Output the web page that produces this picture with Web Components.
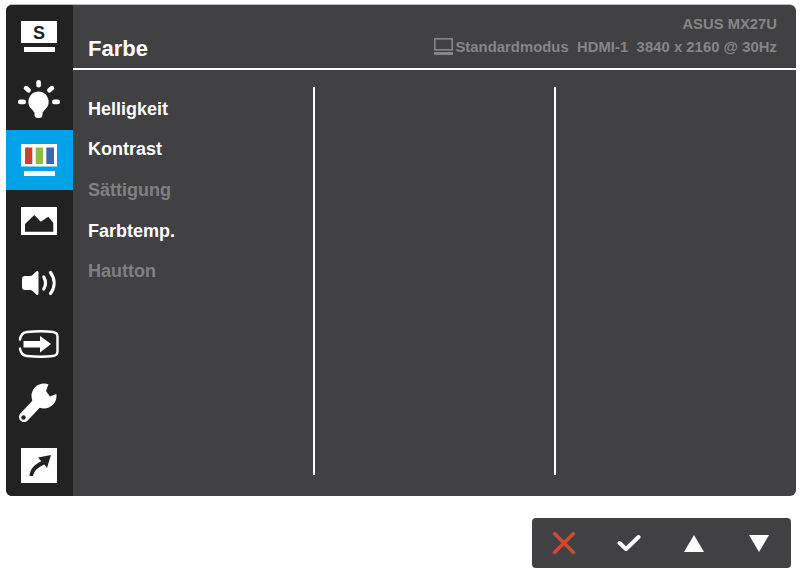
<!DOCTYPE html>
<html>
<head>
<meta charset="utf-8">
<title>OSD</title>
<style>
    html, body { margin: 0; background: #fff; }
    body { width: 800px; height: 573px; overflow: hidden; font-family: "Liberation Sans", Arial, sans-serif; }
</style>
</head>
<body>
<osd-screen>
    <osd-sidebar slot="side">
        <osd-tab icon="splendid"></osd-tab>
        <osd-tab icon="bulb"></osd-tab>
        <osd-tab icon="colors" active></osd-tab>
        <osd-tab icon="image"></osd-tab>
        <osd-tab icon="sound"></osd-tab>
        <osd-tab icon="input"></osd-tab>
        <osd-tab icon="wrench"></osd-tab>
        <osd-tab icon="shortcut"></osd-tab>
    </osd-sidebar>
    <osd-header slot="head" heading="Farbe" model="ASUS MX27U" status="Standardmodus&nbsp; HDMI-1&nbsp; 3840 x 2160 @ 30Hz"></osd-header>
    <osd-columns slot="body">
        <osd-item>Helligkeit</osd-item>
        <osd-item>Kontrast</osd-item>
        <osd-item disabled>Sättigung</osd-item>
        <osd-item>Farbtemp.</osd-item>
        <osd-item disabled>Hautton</osd-item>
    </osd-columns>
</osd-screen>
<osd-keys></osd-keys>

<script>
const TAB_ICONS = {
    splendid: `<svg width="36" height="31" viewBox="0 0 36 31">
        <rect x="0" y="0" width="36" height="22" fill="#fff"/>
        <rect x="3" y="26" width="31" height="5" fill="#fff"/>
        <text x="18" y="18" text-anchor="middle" font-family="Liberation Sans" font-weight="700" font-size="18" fill="#232223">S</text>
    </svg>`,
    bulb: `<svg width="42" height="38" viewBox="0 0 42 38" fill="#fff">
        <path d="M20.500 11.500a10.200 10.200 0 0 1 6.500 18c-1 .9-1.600 1.800-1.800 2.800h-9.400c-.2-1-.8-1.900-1.800-2.800a10.200 10.200 0 0 1 6.500-18z"/>
        <path d="M16.500 32h8v2.500a3.500 3.500 0 0 1-3.500 3.500h-1a3.500 3.500 0 0 1-3.500-3.500z"/>
        <rect x="18.300" y="0" width="4.600" height="7.500" rx="2.300"/>
        <rect x="0" y="19.600" width="8" height="4.600" rx="2.300"/>
        <rect x="34" y="19.600" width="8" height="4.600" rx="2.300"/>
        <rect x="7" y="5.200" width="4.600" height="8" rx="2.300" transform="rotate(-50 9.300 9.200)"/>
        <rect x="30.400" y="5.200" width="4.600" height="8" rx="2.300" transform="rotate(50 32.700 9.200)"/>
    </svg>`,
    colors: `<svg width="36" height="32" viewBox="0 0 36 32">
        <rect x="0" y="0" width="36" height="22.500" fill="#fff"/>
        <rect x="4" y="3.500" width="7.300" height="16.500" fill="#c8432c"/>
        <rect x="14.700" y="3.500" width="7.300" height="16.500" fill="#8cbd44"/>
        <rect x="25.300" y="3.500" width="7.700" height="16.500" fill="#3f66b0"/>
        <rect x="3" y="27" width="31" height="5" fill="#fff"/>
    </svg>`,
    image: `<svg width="36" height="28" viewBox="0 0 36 28">
        <path fill="#fff" fill-rule="evenodd" d="M0 0h36v28H0zM4 24.700h28.300v-9L27.300 9.700l-7.600 5L13.300 8 4 17z"/>
    </svg>`,
    sound: `<svg width="36" height="26" viewBox="0 0 36 26" fill="none">
        <path fill="#fff" d="M1 9C1 7 2 6 4 6H10C12 5 14 2.500 15.500 1.300 16.500.6 17.500 1.200 17.500 2.500V23.500C17.500 24.800 16.500 25.400 15.500 24.700 14 23.500 12 21 10 20H4C2 20 1 19 1 17z"/>
        <path stroke="#fff" stroke-width="3.200" stroke-linecap="round" d="M22.800 7c2.300 4 2.300 8 0 12"/>
        <path stroke="#fff" stroke-width="3.200" stroke-linecap="round" d="M29.500 2.500c4.800 6.500 4.800 14.500 0 21"/>
    </svg>`,
    input: `<svg width="42" height="30" viewBox="0 0 42 30" fill="none">
        <path stroke="#fff" stroke-width="2.400" stroke-linecap="round" d="M2 10.500C2.500 6.500 4.500 3.500 9 3 18 2 28 2 35 3 38.500 3.500 39.500 5 39.500 7.500V22.500C39.500 25 38.500 26.500 35 27 28 28 18 28 9 27 4.500 26.500 2.500 23.500 2 19.500"/>
        <path fill="#fff" d="M5.500 12h16.500V7l11 8-11 8.500v-5H5.500z"/>
    </svg>`,
    wrench: `<svg width="42" height="42" viewBox="0 0 42 42">
        <path stroke="#fff" stroke-width="10" stroke-linecap="round" d="M6 34 22 17"/>
        <circle cx="26" cy="13" r="12.500" fill="#fff"/>
        <path fill="#232223" d="M31 0 28 8 32 13.500 42 9.500V0z"/>
        <circle cx="5.500" cy="34.500" r="2.200" fill="#232223"/>
    </svg>`,
    shortcut: `<svg width="36" height="35" viewBox="0 0 36 35">
        <rect width="36" height="35" fill="#fff"/>
        <path fill="#232223" d="M30 7 17 9.500 20.300 13.300C13.500 16.500 9 21 8.500 28H12C13 23 17 19 23.500 16.500L26 20z"/>
    </svg>`
};

class OsdScreen extends HTMLElement {
    constructor() {
        super();
        this.attachShadow({ mode: 'open' });
        this.shadowRoot.innerHTML = `
            <style>
                :host {
                    display: grid;
                    grid-template-columns: 67px 723px;
                    grid-template-rows: 65px 426px;
                    margin: 5px 4px 0 6px;
                    height: 491px;
                    background: #414042;
                    border-radius: 6px;
                    overflow: hidden;
                    box-shadow: 0 -1px 0 #bbb;
                }
                ::slotted([slot=side]) { grid-row: 1 / 3; }
            </style>
            <slot name="side"></slot>
            <slot name="head"></slot>
            <slot name="body"></slot>
        `;
    }
}

class OsdSidebar extends HTMLElement {
    constructor() {
        super();
        this.attachShadow({ mode: 'open' });
        this.shadowRoot.innerHTML = `
            <style>
                :host {
                    display: grid;
                    grid-template-rows: 61px 64px 60px 62px 61px 61px 60px 62px;
                    background: #232223;
                }
            </style>
            <slot></slot>
        `;
    }
}

class OsdTab extends HTMLElement {
    connectedCallback() {
        const name = this.getAttribute('icon');
        this.attachShadow({ mode: 'open' });
        this.shadowRoot.innerHTML = `
            <style>
                :host { display: flex; align-items: center; justify-content: center; padding-right: 1px; }
                :host([active]) { background: #00a3e8; }
                :host([icon=splendid]), :host([icon=bulb]) { padding-top: 2px; }
                svg { display: block; }
            </style>
            ${TAB_ICONS[name]}
        `;
    }
}

class OsdHeader extends HTMLElement {
    connectedCallback() {
        this.attachShadow({ mode: 'open' });
        this.shadowRoot.innerHTML = `
            <style>
                :host {
                    display: flex;
                    justify-content: space-between;
                    align-items: flex-end;
                    padding: 0 19px 6px 15px;
                    border-bottom: 2px solid #fff;
                    height: 57px;
                }
                h1 { margin: 0; font: 700 22px/26px "Liberation Sans", sans-serif; color: #fff; }
                .info { margin-bottom: 6px; text-align: right; color: #868688; font: 700 14.8px/17px "Liberation Sans", sans-serif; }
                .model { margin-bottom: 5px; }
                .status { display: flex; align-items: flex-end; gap: 2px; letter-spacing: .05px; }
                svg { display: block; }
            </style>
            <h1>${this.getAttribute('heading')}</h1>
            <div class="info">
                <div class="model">${this.getAttribute('model')}</div>
                <div class="status">
                    <svg width="19" height="18" viewBox="0 0 19 18" fill="none" stroke="#868688">
                        <rect x=".8" y=".8" width="17.400" height="11" stroke-width="1.600"/>
                        <path d="M0 15.500h19" stroke-width="3"/>
                    </svg>
                    <span>${this.getAttribute('status')}</span>
                </div>
            </div>
        `;
    }
}

class OsdColumns extends HTMLElement {
    constructor() {
        super();
        this.attachShadow({ mode: 'open' });
        this.shadowRoot.innerHTML = `
            <style>
                :host {
                    display: grid;
                    grid-template-columns: 240px 241px 242px;
                    padding: 17px 0 21px;
                    height: 426px;
                    box-sizing: border-box;
                }
                .menu { display: flex; flex-direction: column; padding: 1.500px 0 0 15px; }
                .col { border-left: 2px solid #fff; }
            </style>
            <div class="menu"><slot></slot></div>
            <div class="col"></div>
            <div class="col"></div>
        `;
    }
}

class OsdItem extends HTMLElement {
    constructor() {
        super();
        this.attachShadow({ mode: 'open' });
        this.shadowRoot.innerHTML = `
            <style>
                :host { display: block; height: 40.7px; font: 700 18px/40.7px "Liberation Sans", sans-serif; color: #fff; }
                :host([disabled]) { color: #808082; }
            </style>
            <slot></slot>
        `;
    }
}

class OsdKeys extends HTMLElement {
    constructor() {
        super();
        this.attachShadow({ mode: 'open' });
        this.shadowRoot.innerHTML = `
            <style>
                :host {
                    display: grid;
                    grid-template-columns: 63px 67px 64px 65px;
                    justify-items: center;
                    align-items: center;
                    width: 259px;
                    height: 50px;
                    margin: 22px 0 0 532px;
                    background: #414042;
                    border-radius: 4px;
                }
                svg { display: block; }
            </style>
            <svg width="24" height="24" viewBox="0 0 24 24"><path d="M1.500 1.500 22.500 22.500M22.500 1.500 1.500 22.500" stroke="#cf4a30" stroke-width="3.500" fill="none"/></svg>
            <svg width="24" height="18" viewBox="0 0 24 18"><path d="M2.500 9l6.500 6L21.500 3" stroke="#fff" stroke-width="4" fill="none" stroke-linecap="round" stroke-linejoin="round"/></svg>
            <svg width="20" height="17" viewBox="0 0 20 17"><path d="M10 0l10 17H0z" fill="#fff"/></svg>
            <svg width="20" height="17" viewBox="0 0 20 17"><path d="M0 0h20L10 17z" fill="#fff"/></svg>
        `;
    }
}

customElements.define('osd-screen', OsdScreen);
customElements.define('osd-sidebar', OsdSidebar);
customElements.define('osd-tab', OsdTab);
customElements.define('osd-header', OsdHeader);
customElements.define('osd-columns', OsdColumns);
customElements.define('osd-item', OsdItem);
customElements.define('osd-keys', OsdKeys);
</script>
</body>
</html>
